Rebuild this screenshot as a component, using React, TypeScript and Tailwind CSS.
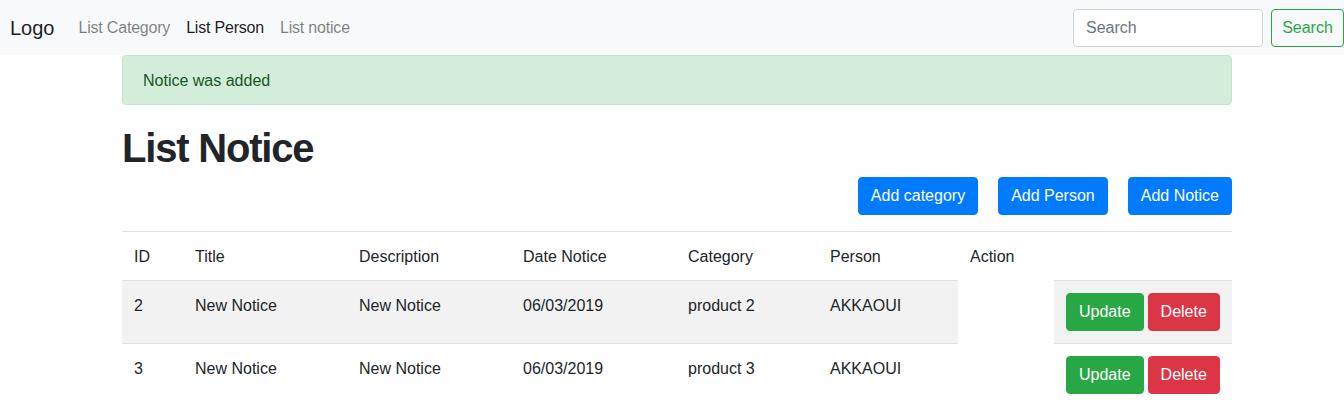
import React from "react";

const rows = [
  { id: "2", title: "New Notice", desc: "New Notice", date: "06/03/2019", cat: "product 2", person: "AKKAOUI" },
  { id: "3", title: "New Notice", desc: "New Notice", date: "06/03/2019", cat: "product 3", person: "AKKAOUI" },
];

export default function App() {
  return (
    <div className="min-h-[417px] bg-white font-['Liberation_Sans',Arial,sans-serif] text-[16px] leading-6 text-[#212529]">
      <nav className="flex h-[55px] items-center bg-[#f8f9fa] pl-[10px] pr-0 pt-px">
        <a className="mr-4 text-[20px] leading-[30px] text-black/90">Logo</a>
        <div className="flex items-center tracking-[-0.2px]">
          <a className="px-2 text-black/50">List Category</a>
          <a className="px-2 text-black/90">List Person</a>
          <a className="px-2 text-black/50">List notice</a>
        </div>
        <div className="ml-auto flex items-center">
          <input
            className="h-[38px] w-[190px] rounded border border-[#ced4da] bg-white px-3 text-[16px] text-[#495057] placeholder:text-[#6c757d] outline-none"
            placeholder="Search"
          />
          <button className="ml-2 h-[38px] w-[73px] rounded border border-[#28a745] text-center text-[16px] text-[#28a745]">
            Search
          </button>
        </div>
      </nav>

      <div className="ml-[122px] w-[1110px]">
        <div className="rounded border border-[#c3e6cb] bg-[#d4edda] px-5 pt-[13px] pb-[11px] text-[#155724]">Notice was added</div>

        <h1 className="mt-[19px] mb-[5px] text-[40px] font-bold leading-[48px] tracking-[-1.2px]">List Notice</h1>

        <div className="mt-0 mb-4 flex justify-end gap-5">
          <button className="h-[38px] rounded border border-[#007bff] bg-[#007bff] px-3 text-white">Add category</button>
          <button className="h-[38px] rounded border border-[#007bff] bg-[#007bff] px-3 text-white">Add Person</button>
          <button className="h-[38px] rounded border border-[#007bff] bg-[#007bff] px-3 text-white">Add Notice</button>
        </div>

        <table className="w-full table-fixed border-collapse text-left">
          <colgroup>
            <col className="w-[61px]" />
            <col className="w-[164px]" />
            <col className="w-[164px]" />
            <col className="w-[165px]" />
            <col className="w-[142px]" />
            <col className="w-[140px]" />
            <col className="w-[96px]" />
            <col className="w-[178px]" />
          </colgroup>
          <thead>
            <tr>
              {["ID", "Title", "Description", "Date Notice", "Category", "Person", "Action", ""].map((h, i) => (
                <th key={i} className="border-t border-[#dee2e6] px-3 pt-[13px] pb-[11px] align-top font-normal">
                  {h}
                </th>
              ))}
            </tr>
          </thead>
          <tbody>
            {rows.map((r, idx) => {
              const bg = idx === 0 ? "bg-[#f2f2f2]" : "bg-white";
              const cell = `border-t border-[#dee2e6] px-3 pt-[13px] pb-[11px] align-top ${bg}`;
              return (
                <tr key={r.id}>
                  <td className={cell}>{r.id}</td>
                  <td className={cell}>{r.title}</td>
                  <td className={cell}>{r.desc}</td>
                  <td className={cell}>{r.date}</td>
                  <td className={cell}>{r.cat}</td>
                  <td className={cell}>{r.person}</td>
                  <td className="bg-white p-3"></td>
                  <td className={`border-t border-[#dee2e6] p-3 align-top ${bg}`}>
                    <div className="flex">
                      <button className="h-[38px] rounded border border-[#28a745] bg-[#28a745] px-3 text-white">Update</button>
                      <button className="ml-1 h-[38px] rounded border border-[#dc3545] bg-[#dc3545] px-3 text-white">Delete</button>
                    </div>
                  </td>
                </tr>
              );
            })}
          </tbody>
        </table>
      </div>
    </div>
  );
}
